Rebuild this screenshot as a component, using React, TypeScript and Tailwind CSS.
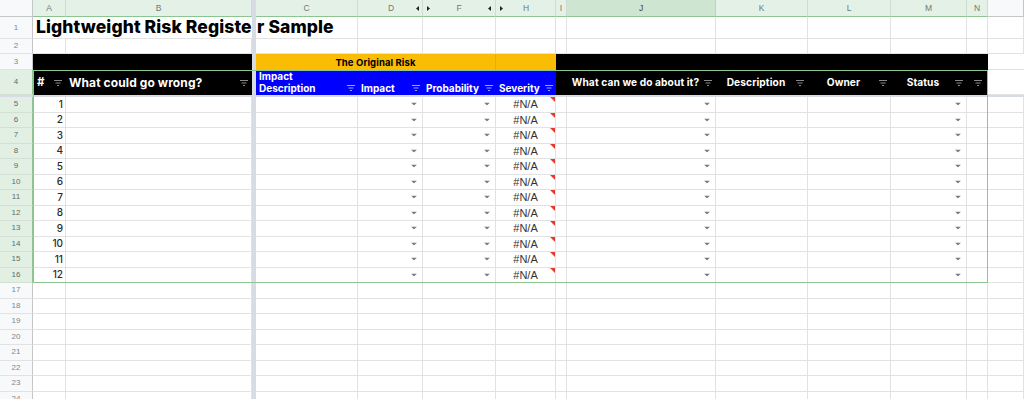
import React from "react";

type ColId = "A" | "B" | "SEP" | "C" | "D" | "F" | "H" | "I" | "J" | "K" | "L" | "M" | "N" | "O";

const COLS: { id: ColId; w: string }[] = [
  { id: "A", w: "w-[33px]" },
  { id: "B", w: "w-[186px]" },
  { id: "SEP", w: "w-[4px]" },
  { id: "C", w: "w-[102px]" },
  { id: "D", w: "w-[65px]" },
  { id: "F", w: "w-[73px]" },
  { id: "H", w: "w-[60px]" },
  { id: "I", w: "w-[11px]" },
  { id: "J", w: "w-[149px]" },
  { id: "K", w: "w-[92px]" },
  { id: "L", w: "w-[83px]" },
  { id: "M", w: "w-[76px]" },
  { id: "N", w: "w-[21px]" },
  { id: "O", w: "flex-1" },
];

const HEAD_FONT = "font-['Inter','Noto_Sans',sans-serif]";

// little funnel-ish filter glyph in header cells
const FilterIcon = ({ color = "#9a9a9a" }: { color?: string }) => (
  <svg width="8" height="6" viewBox="0 0 8 6" className="shrink-0">
    <path d="M0 0.5h8M1.5 3h5M3 5.5h2" stroke={color} strokeWidth="1" />
  </svg>
);

const DropArrow = () => (
  <svg width="6" height="3" viewBox="0 0 6 3" className="absolute right-[5px] top-1/2 -translate-y-1/2">
    <path d="M0 0h6L3 3z" fill="#7a7a7a" />
  </svg>
);

const HideArrow = ({ dir }: { dir: "l" | "r" }) => (
  <svg width="3" height="5" viewBox="0 0 3 5" className="shrink-0">
    {dir === "l" ? <path d="M3 0v5L0 2.5z" fill="#222" /> : <path d="M0 0v5l3-2.5z" fill="#222" />}
  </svg>
);

const Sep = () => <div className="w-[4px] shrink-0 h-full bg-[#d6dbe4]" />;

const RowHead = ({ n, selected }: { n: number; selected?: boolean }) => (
  <div
    className={`w-[33px] shrink-0 h-full flex items-center justify-center text-[8px] border-b ${
      selected
        ? "bg-[#e2f0e4] text-[#5f6b61] border-r border-r-[#8cc492] border-b-[#d3dfd5]"
        : "bg-[#f8f9fa] text-[#80868b] border-r border-r-[#c4c7c5] border-b-[#e2e2e2]"
    } font-['Liberation_Sans',Arial,sans-serif]`}
  >
    {n}
  </div>
);

function GridRow({
  h,
  n,
  selected,
  noRight = [],
  render,
}: {
  h: string;
  n: number;
  selected?: boolean;
  noRight?: ColId[];
  render?: (id: ColId) => React.ReactNode;
}) {
  return (
    <div className={`flex ${h}`}>
      <RowHead n={n} selected={selected} />
      {COLS.map((c) =>
        c.id === "SEP" ? (
          <Sep key={c.id} />
        ) : (
          <div
            key={c.id}
            className={`${c.w} shrink-0 h-full relative border-b border-[#e2e2e2] ${
              noRight.includes(c.id) ? "" : "border-r"
            }`}
          >
            {render?.(c.id)}
          </div>
        )
      )}
    </div>
  );
}

const ColumnHeader = () => (
  <div className="flex h-[17px]">
    <div className="w-[33px] shrink-0 h-full bg-[#f8f9fa] border-r border-b border-[#c4c7c5]" />
    {COLS.map((c) => {
      if (c.id === "SEP") return <Sep key={c.id} />;
      const active = c.id === "J";
      const plain = c.id === "O";
      return (
        <div
          key={c.id}
          className={`${c.w} shrink-0 h-full flex items-center border-r border-b text-[8.5px] font-['Liberation_Sans',Arial,sans-serif] ${
            plain
              ? "bg-[#f8f9fa] border-[#c4c7c5]"
              : active
              ? "bg-[#cde5d1] text-[#3c4a3f] border-[#b9d3bd] border-b-[#8cc492]"
              : "bg-[#e4f1e6] text-[#6f7a71] border-[#cfdcd1] border-b-[#8cc492]"
          }`}
        >
          {c.id === "D" ? (
            <>
              <span className="flex-1 text-center pl-[8px]">D</span>
              <span className="pr-[3px]">
                <HideArrow dir="l" />
              </span>
            </>
          ) : c.id === "F" ? (
            <>
              <span className="pl-[4px]">
                <HideArrow dir="r" />
              </span>
              <span className="flex-1 text-center">F</span>
              <span className="pr-[4px]">
                <HideArrow dir="l" />
              </span>
            </>
          ) : c.id === "H" ? (
            <>
              <span className="pl-[4px]">
                <HideArrow dir="r" />
              </span>
              <span className="flex-1 text-center pr-[6px]">H</span>
            </>
          ) : plain ? null : (
            <span className="flex-1 text-center">{c.id}</span>
          )}
        </div>
      );
    })}
  </div>
);

const TitleRow = () => (
  <GridRow
    h="h-[22px]"
    n={1}
    noRight={["A", "B"]}
    render={(id) =>
      id === "A" ? (
        <span className={`absolute left-[3px] bottom-[1px] z-10 whitespace-nowrap text-[17.5px] leading-[20px] font-extrabold text-black tracking-[0.1px] ${HEAD_FONT}`}>
          Lightweight Risk Registe
        </span>
      ) : id === "C" ? (
        <span className={`absolute left-[1px] bottom-[1px] whitespace-nowrap text-[17.5px] leading-[20px] font-extrabold text-black tracking-[0.1px] ${HEAD_FONT}`}>
          r Sample
        </span>
      ) : null
    }
  />
);

const BandRow = () => (
  <div className={`flex h-[16px] ${HEAD_FONT}`}>
    <RowHead n={3} />
    <div className="w-[219px] shrink-0 h-full bg-black" />
    <Sep />
    <div className="w-[240px] shrink-0 h-full bg-[#fbbc04] border-r border-[#e9ad00] flex items-center justify-center text-[9.5px] font-bold text-black pt-[2px] tracking-[0.1px]">
      The Original Risk
    </div>
    <div className="w-[60px] shrink-0 h-full bg-[#fbbc04]" />
    <div className="w-[432px] shrink-0 h-full bg-black" />
    <div className="flex-1 h-full border-b border-[#e2e2e2]" />
  </div>
);

const BlueHead = ({ w, label, two }: { w: string; label: string; two?: boolean }) => (
  <div className={`${w} shrink-0 h-full bg-[#0000ff] flex items-end justify-between pl-[3px] pr-[3px] pb-[1px]`}>
    <span className={`text-white font-bold text-[10px] leading-[11.5px] ${two ? "w-[64px]" : "whitespace-nowrap"}`}>{label}</span>
    <span className="pb-[3px]">
      <FilterIcon color="#9aa6ff" />
    </span>
  </div>
);

const BlackHead = ({ w, label }: { w: string; label: string }) => (
  <div className={`${w} shrink-0 h-full bg-black flex items-center pr-[4px] pt-[1px]`}>
    <span className="flex-1 text-center text-white font-bold text-[10.2px] whitespace-nowrap tracking-[0.1px]">{label}</span>
    <FilterIcon color="#8a8a8a" />
  </div>
);

const HeaderRow = () => (
  <div className={`flex h-[25px] ${HEAD_FONT}`}>
    <RowHead n={4} selected />
    <div className="w-[33px] shrink-0 h-full bg-black flex items-center justify-between pl-[4px] pr-[4px] pt-[1px]">
      <span className="text-white font-bold text-[11.5px]">#</span>
      <FilterIcon color="#8a8a8a" />
    </div>
    <div className="w-[186px] shrink-0 h-full bg-black flex items-center justify-between pl-[3px] pr-[4px] pt-[1px]">
      <span className="text-white font-bold text-[12px] whitespace-nowrap tracking-[0.1px]">What could go wrong?</span>
      <FilterIcon color="#8a8a8a" />
    </div>
    <Sep />
    <BlueHead w="w-[102px]" label="Impact Description" two />
    <BlueHead w="w-[65px]" label="Impact" />
    <BlueHead w="w-[73px]" label="Probability" />
    <BlueHead w="w-[60px]" label="Severity" />
    <div className="w-[11px] shrink-0 h-full bg-black" />
    <BlackHead w="w-[149px]" label="What can we do about it?" />
    <BlackHead w="w-[92px]" label="Description" />
    <BlackHead w="w-[83px]" label="Owner" />
    <BlackHead w="w-[76px]" label="Status" />
    <div className="w-[21px] shrink-0 h-full bg-black flex items-center justify-center pt-[1px]">
      <FilterIcon color="#8a8a8a" />
    </div>
    <div className="flex-1 h-full border-b border-[#e2e2e2]" />
  </div>
);

const dataCell = (i: number) => (id: ColId) => {
  switch (id) {
    case "A":
      return (
        <span className={`absolute right-[2px] inset-y-0 flex items-center text-[10px] font-medium text-[#2b2b2b] ${HEAD_FONT}`}>
          {i}
        </span>
      );
    case "D":
    case "F":
    case "J":
    case "M":
      return <DropArrow />;
    case "H":
      return (
        <>
          <span className="absolute inset-0 flex items-center justify-center text-[11px] text-[#333] font-['Liberation_Sans',Arial,sans-serif]">
            #N/A
          </span>
          <span className="absolute top-0 right-0 w-0 h-0 border-t-[5px] border-t-[#e53935] border-l-[5px] border-l-transparent" />
        </>
      );
    default:
      return null;
  }
};

export default function App() {
  const data = Array.from({ length: 12 }, (_, k) => k + 1);
  const empty = Array.from({ length: 7 }, (_, k) => k + 17);

  return (
    <div className="relative w-[1024px] h-[399px] overflow-hidden bg-white">
      <ColumnHeader />
      <TitleRow />
      <GridRow h="h-[15px]" n={2} />
      <BandRow />
      <HeaderRow />
      <div className="h-[2px] bg-[#d6dbe4]" />
      {data.map((i) => (
        <GridRow key={i} h="h-[15.5px]" n={i + 4} selected render={dataCell(i)} />
      ))}
      {empty.map((n) => (
        <GridRow key={n} h="h-[15.5px]" n={n} />
      ))}
      {/* partly visible next row, no label needed at the cut edge */}
      <GridRow h="h-[15.5px]" n={24} />
      {/* selection outline A4:N16 */}
      <div className="absolute left-[33px] top-[70px] w-[955px] h-[213px] border border-[#8cc492] pointer-events-none z-20" />
    </div>
  );
}
